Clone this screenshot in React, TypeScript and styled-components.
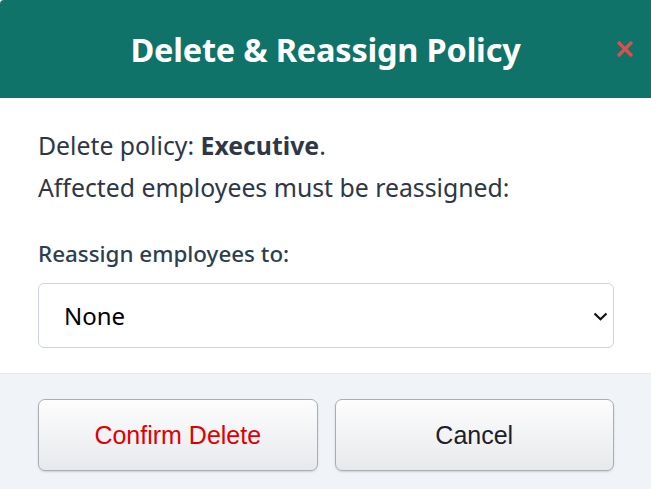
import React from "react"
import styled, { createGlobalStyle } from "styled-components"

const GlobalStyle = createGlobalStyle`
  html, body {
    margin: 0;
    padding: 0;
    background: #ffffff;
  }
  * {
    box-sizing: border-box;
  }
`

const Modal = styled.div`
  width: 651px;
  display: flex;
  flex-direction: column;
  font-family: "Noto Sans", "Open Sans", sans-serif;
  border-top-left-radius: 4px;
  overflow: hidden;
`

const Header = styled.header`
  height: 98px;
  background: #0f7369;
  display: grid;
  grid-template-columns: 1fr auto 1fr;
  align-items: center;
`

const Title = styled.h2`
  grid-column: 2;
  margin: 0;
  color: #ffffff;
  font-size: 32.5px;
  font-weight: 700;
  letter-spacing: -0.2px;
`

const CloseButton = styled.button`
  grid-column: 3;
  justify-self: end;
  margin-right: 16px;
  width: 20px;
  height: 20px;
  padding: 0;
  border: none;
  background: transparent;
  display: flex;
  align-items: center;
  justify-content: center;
  cursor: pointer;
`

const Body = styled.section`
  padding: 26px 37px 25px 38px;
  background: #ffffff;
  display: flex;
  flex-direction: column;
`

const Line = styled.p`
  margin: 0;
  font-size: 24.8px;
  line-height: 42px;
  color: #2d3748;
`

const Label = styled.label`
  margin-top: 31px;
  margin-bottom: 14px;
  font-size: 22.4px;
  line-height: 30px;
  font-weight: 500;
  color: #2d3e50;
`

const SelectWrap = styled.div`
  position: relative;
`

const Select = styled.select`
  appearance: none;
  display: block;
  height: 65px;
  width: 100%;
  padding: 0 40px 0 25px;
  border: 1px solid #cbd5e0;
  border-radius: 6px;
  background: #ffffff;
  font-family: "Noto Sans", sans-serif;
  font-size: 24px;
  color: #000000;
`

const Chevron = styled.svg`
  position: absolute;
  right: 6px;
  top: 29px;
  width: 15px;
  height: 9px;
  pointer-events: none;
`

const Footer = styled.footer`
  background: #f0f4f8;
  border-top: 1px solid #e2e8f0;
  padding: 25px 37px 26px 38px;
  display: grid;
  grid-template-columns: 1fr 1fr;
  gap: 17px;
`

const Button = styled.button<{ danger?: boolean }>`
  height: 72px;
  border: 1px solid #a9aeb4;
  border-radius: 7px;
  background: linear-gradient(#fdfdfd, #e7e9ec);
  box-shadow: 0 1px 2px rgba(0, 0, 0, 0.15);
  font-family: "Liberation Sans", Arial, sans-serif;
  font-size: 25px;
  color: ${props => (props.danger ? "#e00000" : "#1a202c")};
  cursor: pointer;
`

export default function App() {
  return (
    <>
      <GlobalStyle />
      <Modal>
        <Header>
          <Title>Delete &amp; Reassign Policy</Title>
          <CloseButton aria-label="Close">
            <svg width="18" height="18" viewBox="0 0 18 18">
              <path d="M2 2 L16 16 M16 2 L2 16" stroke="#dc4f4f" strokeWidth="3.2" />
            </svg>
          </CloseButton>
        </Header>
        <Body>
          <Line>
            Delete policy: <strong>Executive</strong>.
          </Line>
          <Line>Affected employees must be reassigned:</Line>
          <Label htmlFor="reassign">Reassign employees to:</Label>
          <SelectWrap>
            <Select id="reassign" defaultValue="none">
              <option value="none">None</option>
            </Select>
            <Chevron viewBox="0 0 15 9">
              <path d="M1.5 1.5 L7.5 7.2 L13.5 1.5" fill="none" stroke="#111111" strokeWidth="2.2" />
            </Chevron>
          </SelectWrap>
        </Body>
        <Footer>
          <Button danger>Confirm Delete</Button>
          <Button>Cancel</Button>
        </Footer>
      </Modal>
    </>
  )
}
